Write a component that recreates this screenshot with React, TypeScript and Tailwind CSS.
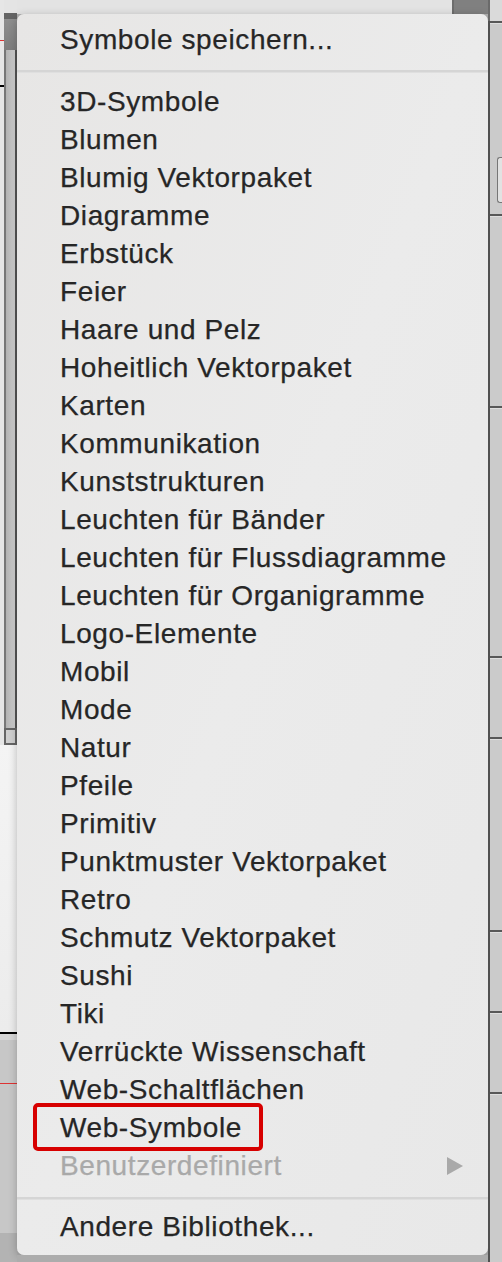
import React from "react";

const libraries = [
  "3D-Symbole",
  "Blumen",
  "Blumig Vektorpaket",
  "Diagramme",
  "Erbstück",
  "Feier",
  "Haare und Pelz",
  "Hoheitlich Vektorpaket",
  "Karten",
  "Kommunikation",
  "Kunststrukturen",
  "Leuchten für Bänder",
  "Leuchten für Flussdiagramme",
  "Leuchten für Organigramme",
  "Logo-Elemente",
  "Mobil",
  "Mode",
  "Natur",
  "Pfeile",
  "Primitiv",
  "Punktmuster Vektorpaket",
  "Retro",
  "Schmutz Vektorpaket",
  "Sushi",
  "Tiki",
  "Verrückte Wissenschaft",
  "Web-Schaltflächen",
  "Web-Symbole",
];

// panel ruler segments on the right edge (height between tick marks)
const rulerSegments = [192, 191, 249, 80, 192, 80, 80];

const LeftPanel = () => (
  <div className="flex w-[17px] shrink-0 flex-col">
    <div className="flex h-[745px]">
      <div className="flex w-[4px] flex-col bg-[#e6e6e6]">
        <div className="mt-[40px] h-[1px] bg-[#d33]" />
        <div className="mt-[44px] h-[2px] bg-black" />
      </div>
      <div className="flex w-[13px] flex-col">
        <div className="h-[13px] bg-[#e4e4e4]" />
        <div className="h-[6px] bg-[#646464]" />
        <div className="h-[31px] bg-gradient-to-b from-[#8e8e8e] to-[#7e7e7e]" />
        <div className="flex-1 border-x-2 border-l-[#777] border-r-[#555] bg-gradient-to-r from-[#b2b2b2] to-[#d2d2d2]" />
        <div className="h-[17px] border-2 border-[#666] bg-[#cfcfcf]" />
      </div>
    </div>
    <div className="h-[287px] bg-gradient-to-b from-[#f4f4f4] to-[#ececec]" />
    <div className="h-[2px] bg-black" />
    <div className="flex flex-1 flex-col bg-[#c7c7c7]">
      <div className="h-[6px] bg-[#d6d6d6]" />
      <div className="mt-[43px] h-[1px] bg-[#d33]" />
      <div className="flex-1" />
      <div className="h-[29px] bg-[#b3b3b3]" />
    </div>
  </div>
);

const RightPanel = () => (
  <div className="flex w-[14px] shrink-0 flex-col">
    <div className="flex h-[21px]">
      <div className="w-[2px] bg-[#6a6a6a]" />
      <div className="flex-1 bg-[#dadada]" />
    </div>
    <div className="flex flex-1 flex-col border-l-2 border-[#505050] bg-[#cbcbcb]">
      {rulerSegments.map((h, i) => (
        <React.Fragment key={i}>
          <div className="h-[2px] bg-[#585858]" />
          <div
            className="flex flex-col items-end border-t border-[#dedede]"
            style={{ height: h - 1 }}
          >
            {i === 0 && (
              <div className="mt-[133px] h-[46px] w-[5px] rounded-l-[3px] border border-r-0 border-[#777] bg-[#e2e2e2]" />
            )}
          </div>
        </React.Fragment>
      ))}
      <div className="h-[2px] bg-[#585858]" />
      <div className="flex-1 border-t border-[#dedede]" />
    </div>
  </div>
);

const Separator = ({ className }: { className: string }) => (
  <div className={`h-[3px] bg-[#d5d5d5] border-b border-[#dfdfdf] ${className}`} />
);

const Menu = () => (
  <div className="flex w-[471px] shrink-0 flex-col bg-[#b0b0b0]">
    <div className="flex h-[14px] bg-[#e3e3e3]">
      <div className="flex-1" />
      <div className="w-[36px] border-l-2 border-[#6d6d6d] bg-[#808080]" />
    </div>
    <div
      className="rounded-[7px] bg-gradient-to-br from-[#e7e6e5] via-[#ebebeb] to-[#e8e8e8] pt-[7px] pb-[9px] text-[28px] leading-[38px] tracking-[0.6px] text-[#262626] shadow-[0_2px_8px_rgba(0,0,0,0.25)] [-webkit-text-stroke:0.25px_currentColor]"
      style={{ fontFamily: '"Liberation Sans", Arial, sans-serif' }}
    >
      <div className="pl-[43px]">Symbole speichern...</div>
      <Separator className="mt-[11px] mb-[10px]" />
      {libraries.map((name) => (
        <div key={name} className="relative pl-[43px]">
          {name === "Web-Symbole" && (
            <div className="absolute top-[-6px] left-[16px] h-[48px] w-[230px] rounded-[5px] border-[4px] border-[#d70000]" />
          )}
          {name}
        </div>
      ))}
      <div className="flex items-center justify-between pl-[43px] pr-[25px] text-[#a9a9a9]">
        <span>Benutzerdefiniert</span>
        <svg width="16" height="18" viewBox="0 0 16 18">
          <polygon points="0,0 16,9 0,18" fill="#a9a9a9" />
        </svg>
      </div>
      <Separator className="mt-[12px] mb-[8px]" />
      <div className="pl-[43px]">Andere Bibliothek...</div>
    </div>
    <div className="flex-1 bg-[#acacac]" />
  </div>
);

export default function App() {
  return (
    <div className="flex h-[1262px] w-[502px] overflow-hidden bg-[#e3e3e3]">
      <LeftPanel />
      <Menu />
      <RightPanel />
    </div>
  );
}
